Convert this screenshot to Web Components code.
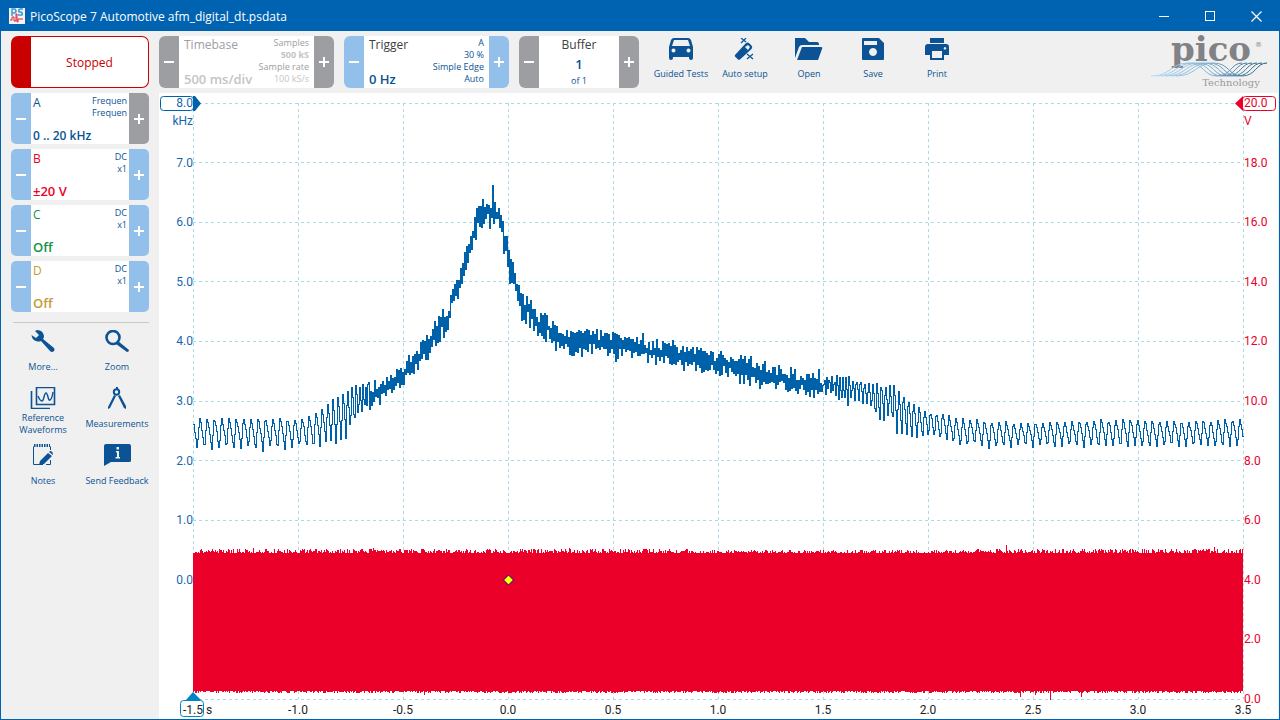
<!DOCTYPE html>
<html lang="en">
<head>
<meta charset="utf-8">
<title>PicoScope 7 Automotive</title>
<style>
    html, body {
        margin: 0;
        height: 100%;
    }
    body {
        font-family: "Open Sans", "Noto Sans", "Liberation Sans", sans-serif;
        font-size: 12px;
        color: #0b5394;
    }
</style>
</head>
<body>
<scope-app></scope-app>
<script>
"use strict";

class WindowBar extends HTMLElement {
    constructor() {
        super();
        this.attachShadow({ mode: 'open' });
    }
    connectedCallback() {
        this.shadowRoot.innerHTML = `
            <style>
                :host {
                    display: flex;
                    align-items: center;
                    height: 30px;
                    background: #0063b1;
                    color: #fff;
                }
                .logo {
                    margin: 0 5px 0 8px;
                }
                .title {
                    flex: 1;
                    font-size: 12px;
                }
                button {
                    display: flex;
                    align-items: center;
                    justify-content: center;
                    width: 46px;
                    height: 30px;
                    padding: 0;
                    border: 0;
                    background: none;
                }
            </style>
            <svg class="logo" width="16" height="16" viewBox="0 0 16 16">
                <rect width="16" height="16" fill="#f4f4f6"/>
                <path d="M3 8V1H6Q8 3 6 5H3M14 1H11Q9 2 10 4H12Q14 5 13 7H9" fill="none" stroke="#3f9bd0" stroke-width="1.500"/>
                <path d="M1 12H3V9H5V13H7V6H8V14H9V11H14" fill="none" stroke="#d8263c"/>
            </svg>
            <span class="title"><slot></slot></span>
            <button aria-label="Minimize"><svg width="11" height="11"><path d="M0 5.5H10" stroke="#fff"/></svg></button>
            <button aria-label="Maximize"><svg width="11" height="11"><rect x=".5" y=".5" width="9" height="9" fill="none" stroke="#fff"/></svg></button>
            <button aria-label="Close"><svg width="11" height="11"><path d="M.5 .5L10.5 10.5M10.5 .5L.5 10.5" stroke="#fff" stroke-width="1.2"/></svg></button>
        `;
    }
}
customElements.define('window-bar', WindowBar);

// A value with a minus and a plus button. Attributes "minus" and "plus" take "off" to grey one out.
class StepCard extends HTMLElement {
    constructor() {
        super();
        this.attachShadow({ mode: 'open' });
    }
    connectedCallback() {
        this.shadowRoot.innerHTML = `
            <style>
                :host {
                    display: flex;
                    border-radius: 6px;
                    overflow: hidden;
                    background: #fff;
                }
                button {
                    border: 0;
                    padding: 0;
                    font: inherit;
                    color: inherit;
                    background: none;
                }
                .step {
                    display: flex;
                    align-items: center;
                    justify-content: center;
                    flex: none;
                    width: 20px;
                    background: #93bfeb;
                }
                .step.off {
                    background: #9d9ea2;
                }
                .body {
                    flex: 1;
                    min-width: 0;
                    display: flex;
                    justify-content: space-between;
                    padding: var(--card-pad, 2px 2px 0);
                    text-align: left;
                }
                .main {
                    display: flex;
                    flex-direction: column;
                    justify-content: space-between;
                    height: 100%;
                    white-space: nowrap;
                    line-height: 16px;
                }
                .value {
                    font-weight: 600;
                }
                .side {
                    font-size: 9px;
                    line-height: 12px;
                    text-align: right;
                    white-space: nowrap;
                    color: var(--side, #0b5394);
                }
                :host([centered]) .body {
                    justify-content: center;
                    text-align: center;
                }
                ::slotted(*) {
                    display: block;
                }
            </style>
            <button class="step ${this.getAttribute('minus') || ''}" aria-label="Decrease">
                <svg width="10" height="10"><path d="M0 5H10" stroke="#fff" stroke-width="2"/></svg>
            </button>
            <button class="body">
                <span class="main">
                    <slot name="name"></slot>
                    <span class="value"><slot name="value"></slot></span>
                    <slot name="foot"></slot>
                </span>
                <span class="side"><slot></slot></span>
            </button>
            <button class="step ${this.getAttribute('plus') || ''}" aria-label="Increase">
                <svg width="10" height="10"><path d="M0 5H10M5 0V10" stroke="#fff" stroke-width="2"/></svg>
            </button>
        `;
    }
}
customElements.define('step-card', StepCard);

class RunButton extends HTMLElement {
    constructor() {
        super();
        this.attachShadow({ mode: 'open' });
    }
    connectedCallback() {
        this.shadowRoot.innerHTML = `
            <style>
                :host {
                    display: block;
                }
                button {
                    box-sizing: border-box;
                    width: 100%;
                    height: 100%;
                    padding: 0;
                    font: inherit;
                    color: #c80000;
                    background: #fff;
                    border: 1px solid #c80000;
                    border-left-width: 20px;
                    border-radius: 7px;
                }
            </style>
            <button><slot></slot></button>
        `;
    }
}
customElements.define('run-button', RunButton);

const ICONS = {
    car: '<path fill-rule="evenodd" d="M7 0H21Q23 0 24 2L26 9V20Q26 22 24 22Q22 22 22 20V19H6V20Q6 22 4 22Q2 22 2 20V9L4 2Q5 0 7 0ZM7 2L5 8H23L21 2ZM6.5 10.500a2 2 0 1 0 .01 0ZM21.500 10.500a2 2 0 1 0 .01 0Z"/>',
    wand: '<path fill-rule="evenodd" d="M4 17L15 5Q17 4 18.500 5.500L20.500 7.500Q22 9 20.500 11L9 21.500Q8 22 7 21.500L4 18.500Q3.500 18 4 17ZM14 9L17 12L19 9L17 7Z"/><path d="M10 0L15 4M15 0L10 5M16 16L22 21M22 16L16 21" fill="none" stroke="currentColor" stroke-width="1.2"/>',
    folder: '<path d="M0 0H10L14 4H22Q24 4 24 6V7H7Q5 7 4 9L0 20Z"/><path d="M7 9H26Q28 9 27 11L23 22H2Z"/>',
    save: '<path fill-rule="evenodd" d="M4 0H20L25 5V21Q25 22 24 22H4Q3 22 3 21V1Q3 0 4 0ZM5 3V7H18V3ZM14 10a4 4 0 1 0 .01 0Z"/>',
    print: '<path fill-rule="evenodd" d="M7 0H21V5H7ZM5 6H23Q26 6 26 9V17H21V22H7V17H2V9Q2 6 5 6ZM9 13V20H19V13ZM22 9a1.300 1.300 0 1 0 .01 0Z"/>',
    wrench: '<path d="M8 0Q14 0 15 6Q15 8 14 9L25 18Q26 20 25 21Q23 23 21 21L12 11Q10 12 7 11Q3 10 2.500 5L7 8L10 5L6 1Z"/>',
    zoom: '<circle cx="10" cy="7.500" r="6.500" fill="none" stroke="currentColor" stroke-width="2.600"/><path d="M15 11L26 20Q26 22 24 22L13 14Z"/>',
    waves: '<path d="M7.500 .500H25.500V17.500H7.500ZM2.500 4V21.500H21" fill="none" stroke="currentColor" stroke-width="1.600"/><path d="M9 9Q11 14 13 14Q14 14 15 10Q16 6 17 6Q18 6 19 10Q20 14 21 13Q23 12 24 5" fill="none" stroke="currentColor" stroke-width="1.400"/>',
    compass: '<circle cx="13.500" cy="5" r="2.700" fill="none" stroke="currentColor" stroke-width="2"/><path d="M13 0H15V3H13ZM11 8L13 9L7 21L5 22V20ZM15 9L17 8L23 19V22L21 21Z"/>',
    notes: '<path d="M4.500 2.500V20.500H14M21.500 2.500V6M21.500 16V20.500H17" fill="none" stroke="currentColor"/><path d="M5 1.500H21" fill="none" stroke="currentColor" stroke-width="3" stroke-dasharray="1.500 1"/><path d="M19 9L23 12L15 20L10 21L11 17ZM20 8L21 7Q24 7 24 11Z"/>',
    feedback: '<path fill-rule="evenodd" d="M3 0H26Q28 0 28 2V17Q28 18 26 18H8L1 22V2Q1 0 3 0ZM13.500 3V5.500H16V3ZM13 7V8.500H14V13H12.500V14.500H17V13H16V7Z"/>'
};

class ToolButton extends HTMLElement {
    constructor() {
        super();
        this.attachShadow({ mode: 'open' });
    }
    connectedCallback() {
        this.shadowRoot.innerHTML = `
            <style>
                :host {
                    display: block;
                }
                button {
                    display: flex;
                    flex-direction: column;
                    align-items: center;
                    width: 100%;
                    height: 100%;
                    padding: 0;
                    border: 0;
                    background: none;
                    font: inherit;
                    color: #0b5394;
                }
                .label {
                    flex: 1;
                    display: flex;
                    align-items: center;
                    font-size: 9px;
                    line-height: 12px;
                    text-align: center;
                    white-space: nowrap;
                }
            </style>
            <button>
                <svg width="28" height="22" viewBox="0 0 28 22" fill="currentColor">${ICONS[this.getAttribute('icon')]}</svg>
                <span class="label"><span><slot></slot></span></span>
            </button>
        `;
    }
}
customElements.define('tool-button', ToolButton);

class PicoLogo extends HTMLElement {
    constructor() {
        super();
        this.attachShadow({ mode: 'open' });
    }
    connectedCallback() {
        let waves = '';
        for (let i = 0; i < 6; i++) {
            const x = i * 5;
            waves += `<path d="M${x} 40C${x + 20} 40 ${x + 20} 27 ${x + 37} 27S${x + 52} 40 ${x + 66} 40S${x + 80} 27 ${x + 91} 27"/>`;
        }
        this.shadowRoot.innerHTML = `
            <style>
                :host {
                    display: block;
                }
                svg {
                    display: block;
                    overflow: visible;
                }
                text {
                    font-family: "DejaVu Serif", serif;
                    fill: #808285;
                }
            </style>
            <svg width="120" height="52" viewBox="0 0 120 52">
                <defs>
                    <linearGradient id="fade" gradientUnits="userSpaceOnUse" x1="0" y1="0" x2="116" y2="0">
                        <stop offset="0" stop-color="#b5dcf5"/>
                        <stop offset=".5" stop-color="#7fb2d6"/>
                        <stop offset="1" stop-color="#1d5878"/>
                    </linearGradient>
                </defs>
                <text x="60" y="25" font-size="34" font-weight="bold" text-anchor="middle">pico</text>
                <text x="104" y="11" font-size="7">®</text>
                <g fill="none" stroke="url(#fade)" stroke-width="1">${waves}</g>
                <text x="80" y="50" font-size="10" text-anchor="middle" style="fill: #999a9c">Technology</text>
            </svg>
        `;
    }
}
customElements.define('pico-logo', PicoLogo);

const W = 1050;
const H = 596;

// x, top, bottom, ripple period
const ENVELOPE = [
    [0, 418, 449, 7.3], [104, 418, 449, 7.3], [112, 416, 446, 7], [119, 413, 449, 7],
    [127, 410, 446, 6], [134, 403, 440, 5.5], [139, 399, 448, 5], [147, 394, 444, 5],
    [154, 387, 439, 4.5], [162, 384, 425, 4], [169, 383, 415, 3], [177, 383, 407, 2],
    [187, 380, 400, 2], [197, 374, 393, 2], [210, 363, 380, 2], [224, 347, 368, 2],
    [240, 323, 348, 2], [247, 310, 337, 2], [255, 303, 328, 2], [258, 286, 300, 2],
    [265, 276, 293, 2], [270, 256, 277, 2], [275, 240, 259, 2], [280, 222, 242, 2],
    [285, 200, 225, 2], [292, 196, 224, 2], [299, 194, 226, 2], [304, 203, 226, 2],
    [309, 208, 248, 2], [314, 238, 264, 2], [316, 258, 282, 2], [320, 260, 280, 2],
    [324, 283, 300, 2], [328, 294, 318, 2], [337, 300, 320, 2], [341, 307, 328, 2],
    [349, 315, 341, 2], [354, 315, 338, 2], [362, 326, 347, 2], [370, 328, 350, 2],
    [377, 332, 357, 2], [390, 332, 352, 2], [404, 330, 350, 2], [417, 334, 354, 2],
    [430, 334, 356, 2], [447, 338, 357, 2], [457, 341, 361, 2], [470, 342, 358, 2],
    [487, 347, 362, 2], [507, 348, 370, 2], [520, 351, 371, 2], [537, 355, 373, 2],
    [550, 357, 383, 2], [564, 358, 384, 2], [584, 366, 385, 2], [594, 371, 388, 2],
    [610, 373, 390, 2], [624, 375, 393, 2.2], [637, 375, 394, 2.5], [650, 375, 404, 3],
    [664, 379, 400, 4], [677, 382, 410, 4.2], [682, 383, 422, 4.2], [697, 383, 422, 4.3],
    [704, 388, 436, 4.6], [711, 393, 437, 5], [717, 400, 437, 5], [724, 405, 439, 5.5],
    [734, 411, 437, 5.8], [750, 413, 440, 6.3], [763, 417, 445, 7], [794, 421, 447, 7.3],
    [795, 421, 449, 7.3], [830, 423, 446, 7.3], [880, 421, 446, 7.3], [934, 419, 447, 7.3],
    [990, 421, 446, 7.3], [1050, 419, 446, 7.3]
];

function makeRandom(seed) {
    return () => {
        seed = (seed * 1664525 + 1013904223) >>> 0;
        return seed / 4294967296;
    };
}

function envelopeAt(x) {
    let i = 1;
    while (ENVELOPE[i][0] < x) i++;
    const a = ENVELOPE[i - 1];
    const b = ENVELOPE[i];
    const t = (x - a[0]) / (b[0] - a[0]);
    return a.map((v, k) => v + (b[k] - v) * t);
}

function frequencyPath() {
    const random = makeRandom(7);
    let phase = 0.1;
    let d = '';
    let jitter = 0;
    for (let x = 0; x < W; x++) {
        const [, top, bottom, period] = envelopeAt(x);
        let y;
        if (period < 2.3) {
            const edge = random() * 0.45 * (bottom - top + 6);
            y = x % 2 ? top - 2 + edge : bottom + 4 - edge;
            if (random() < 0.08) y += (x % 2 ? -1 : 1) * random() * 6;
        } else {
            phase += 1 / period;
            if (phase >= 1) {
                phase -= 1;
                jitter = random() * 3 - 1;
            }
            // slow fall from the crest, fast rise out of the trough
            const level = phase < 0.7 ? Math.pow(phase / 0.7, 1.4) : 1 - (phase - 0.7) / 0.3;
            y = top + level * (bottom - top) + jitter * level + random() * 2 - 1;
        }
        if (x === 299) y = 185;
        y = Math.round(y - 103) + 0.5;
        d += x ? `V${y}H${x + 1.5}` : `M0 ${y}H1.5`;
    }
    return d;
}

function voltagePath() {
    const random = makeRandom(21);
    const spikes = { 60: -3, 180: -4, 376: -4, 813: -7, 940: -3, 1021: -3 };
    const drops = { 232: 3, 828: 6, 843: 3, 858: 9, 889: 4 };
    let up = '';
    let down = '';
    for (let x = 0; x < W; x++) {
        const rough = x > 500 && x < 780 ? 0.7 : 1;
        const top = 450 - Math.floor(Math.pow(random(), 1.3) * 5 * rough) + (spikes[x] || 0);
        const bottom = 588 + Math.floor(random() * 2.6) + (drops[x] || 0);
        up += `V${top}H${x + 1}`;
        down = `H${x}V${bottom}` + down;
    }
    return `M0 450${up}V588${down}Z`;
}

class ScopeView extends HTMLElement {
    constructor() {
        super();
        this.attachShadow({ mode: 'open' });
    }
    connectedCallback() {
        const steps = Array.from({ length: 11 }, (_, i) => i);
        const left = steps.slice(0, 9).map(i => (8 - i).toFixed(1));
        const right = steps.map(i => (20 - i * 2).toFixed(1));
        const bottom = steps.map(i => (i * 0.5 - 1.5).toFixed(1));
        const grid = steps.map(i => {
            const x = i * 105 + 0.5;
            const y = Math.floor(i * 59.6) + 0.5;
            return `M0 ${y}H${W}M${x} 0V${H}`;
        }).join('');
        this.shadowRoot.innerHTML = `
            <style>
                :host {
                    display: grid;
                    grid-template-columns: 34px 1fr 35px;
                    grid-template-rows: 1fr 20px;
                    padding-top: 10px;
                    background: #fff;
                    font-family: Roboto, "Liberation Sans", sans-serif;
                    font-size: 12px;
                }
                .plot {
                    display: block;
                    width: 100%;
                    height: 100%;
                    overflow: visible;
                    min-height: 0;
                }
                .axis {
                    display: flex;
                    justify-content: space-between;
                    line-height: 12px;
                }
                .text {
                    position: relative;
                }
                .y {
                    flex-direction: column;
                }
                .y > span {
                    display: flex;
                    align-items: center;
                    height: 0;
                    position: relative;
                }
                .left {
                    color: #1668ad;
                }
                .left > span {
                    justify-content: flex-end;
                }
                .right {
                    color: #ea0029;
                }
                .right > span {
                    padding-left: 1px;
                }
                .x {
                    grid-column: 2;
                    color: #222;
                    padding-top: 5px;
                }
                .x > span {
                    display: flex;
                    justify-content: center;
                    width: 0;
                    white-space: nowrap;
                    position: relative;
                }
                .unit {
                    position: absolute;
                    top: 12px;
                }
                .x .unit {
                    top: 0;
                    left: 13px;
                }
                .flag {
                    position: absolute;
                    overflow: visible;
                }
            </style>
            <div class="axis y left">
                ${left.map((t, i) => `<span>${i ? '' : `
                    <svg class="flag" style="left: 1px; top: -7px" width="42" height="15">
                        <rect x=".5" y=".5" width="33" height="14" rx="3" fill="#fff" stroke="#0061ab"/>
                        <path d="M33 0H35L41 7.500L35 15H33Z" fill="#0061ab"/>
                    </svg><span class="unit">kHz</span>`}<span class="text">${t}</span></span>`).join('')}
                <span></span><span></span>
            </div>
            <svg class="plot" viewBox="0 0 ${W} ${H}" preserveAspectRatio="none" shape-rendering="crispEdges">
                <path d="${grid}" fill="none" stroke="#add8e6" stroke-dasharray="3 3"/>
                <path d="${frequencyPath()}" fill="none" stroke="#0061ab"/>
                <path d="${voltagePath()}" fill="#ea0029"/>
                <path d="M315.500 472L320.500 477L315.500 482L310.500 477Z" fill="#ff0" stroke="#00a" shape-rendering="auto"/>
            </svg>
            <div class="axis y right">
                ${right.map((t, i) => `<span>${i ? '' : `
                    <svg class="flag" style="left: -8px; top: -7px" width="42" height="15">
                        <rect x="7.500" y=".5" width="33" height="14" rx="3" fill="#fff" stroke="#ea0029"/>
                        <path d="M8 0L0 7.500L8 15Z" fill="#ea0029"/>
                    </svg><span class="unit">V</span>`}<span class="text">${t}</span></span>`).join('')}
            </div>
            <div class="axis x">
                ${bottom.map((t, i) => `<span>${i ? '' : `
                    <svg class="flag" style="left: -13px; top: -12px" width="24" height="26">
                        <path d="M6 8L13 0L21 8Z" fill="#0085ca"/>
                        <rect x=".5" y="8.500" width="23" height="16" rx="3" fill="#fff" stroke="#0085ca"/>
                    </svg><span class="unit">s</span>`}<span class="text">${t}</span></span>`).join('')}
            </div>
        `;
    }
}
customElements.define('scope-view', ScopeView);

class ScopeApp extends HTMLElement {
    constructor() {
        super();
        this.attachShadow({ mode: 'open' });
    }
    connectedCallback() {
        this.render();
    }
    render() {
        this.shadowRoot.innerHTML = `
            <style>
                :host {
                    display: flex;
                    flex-direction: column;
                    box-sizing: border-box;
                    min-height: 100vh;
                    border: 1px solid #0063b1;
                    background: #f0f0f0;
                }
                main {
                    flex: 1;
                    display: grid;
                    grid-template-columns: 158px 1fr;
                    grid-template-rows: 62px 1fr;
                    padding-right: 1px;
                }
                run-button {
                    margin: 5px 10px;
                }
                header {
                    display: flex;
                    padding: 5px 7px 5px 0;
                }
                header step-card {
                    --card-pad: 1px 5px 0;
                    margin-right: 10px;
                }
                .timebase {
                    width: 175px;
                    color: #9d9ea2;
                    --side: #9d9ea2;
                }
                .trigger {
                    width: 165px;
                }
                .buffer {
                    width: 120px;
                }
                .dark {
                    color: #404040;
                }
                .faint {
                    color: #c4c4c6;
                }
                .big {
                    font-size: 13px;
                    line-height: 18px;
                }
                .small {
                    font-size: 9px;
                    line-height: 14px;
                }
                header tool-button {
                    width: 64px;
                    padding-top: 2px;
                    box-sizing: border-box;
                }
                pico-logo {
                    margin-left: auto;
                }
                .channels {
                    display: flex;
                    flex-direction: column;
                    gap: 5px;
                    padding: 0 10px;
                }
                .channels step-card {
                    height: 51px;
                    border-radius: 5px;
                }
                .b {
                    color: #ea0029;
                }
                .c {
                    color: #0f9246;
                }
                .d {
                    color: #c39b32;
                }
                hr {
                    margin: 10px 10px 7px 12px;
                    border: 0;
                    border-top: 1px solid #c8c8c8;
                }
                .tools {
                    display: grid;
                    grid-template-columns: 1fr 1fr;
                    grid-auto-rows: 52px;
                    row-gap: 5px;
                    padding: 0 5px;
                }
            </style>
            <window-bar>PicoScope 7 Automotive afm_digital_dt.psdata</window-bar>
            <main>
                <run-button>Stopped</run-button>
                <header>
                    <step-card class="timebase" minus="off" plus="off">
                        <span slot="name">Timebase</span>
                        <span slot="value" class="big faint">500 ms/div</span>
                        <span>Samples</span><b class="faint">500 kS</b><span>Sample rate</span><span class="faint">100 kS/s</span>
                    </step-card>
                    <step-card class="trigger">
                        <span slot="name" class="dark">Trigger</span>
                        <span slot="value" class="big">0 Hz</span>
                        <span>A</span><span>30 %</span><span>Simple Edge</span><span>Auto</span>
                    </step-card>
                    <step-card class="buffer" minus="off" plus="off" centered>
                        <span slot="name" class="dark">Buffer</span>
                        <span slot="value" class="big">1</span>
                        <span slot="foot" class="small">of 1</span>
                    </step-card>
                    <tool-button icon="car">Guided Tests</tool-button>
                    <tool-button icon="wand">Auto setup</tool-button>
                    <tool-button icon="folder">Open</tool-button>
                    <tool-button icon="save">Save</tool-button>
                    <tool-button icon="print">Print</tool-button>
                    <pico-logo></pico-logo>
                </header>
                <aside>
                    <div class="channels">
                        <step-card plus="off">
                            <span slot="name">A</span><span slot="value">0 .. 20 kHz</span>
                            <span>Frequen</span><span>Frequen</span>
                        </step-card>
                        <step-card class="b">
                            <span slot="name">B</span><span slot="value" class="big">±20 V</span>
                            <span>DC</span><span>x1</span>
                        </step-card>
                        <step-card class="c">
                            <span slot="name">C</span><span slot="value" class="big">Off</span>
                            <span>DC</span><span>x1</span>
                        </step-card>
                        <step-card class="d">
                            <span slot="name">D</span><span slot="value" class="big">Off</span>
                            <span>DC</span><span>x1</span>
                        </step-card>
                    </div>
                    <hr>
                    <div class="tools">
                        <tool-button icon="wrench">More...</tool-button>
                        <tool-button icon="zoom">Zoom</tool-button>
                        <tool-button icon="waves">Reference<br>Waveforms</tool-button>
                        <tool-button icon="compass">Measurements</tool-button>
                        <tool-button icon="notes">Notes</tool-button>
                        <tool-button icon="feedback">Send Feedback</tool-button>
                    </div>
                </aside>
                <scope-view></scope-view>
            </main>
        `;
    }
}
customElements.define('scope-app', ScopeApp);
</script>
</body>
</html>
